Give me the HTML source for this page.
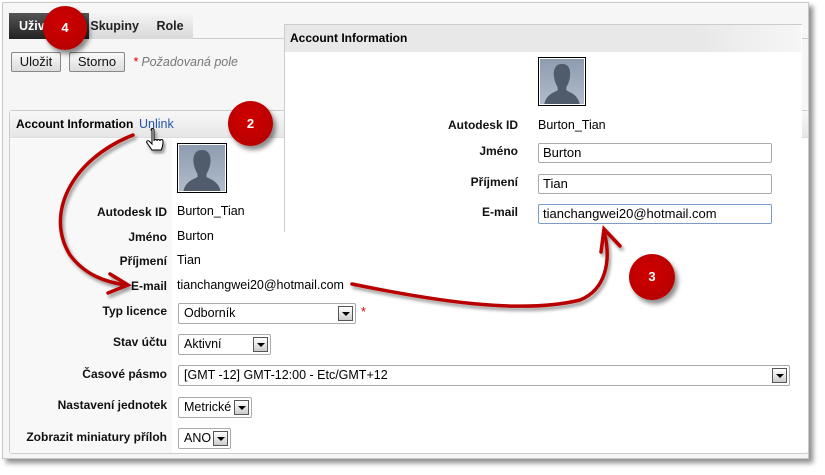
<!DOCTYPE html>
<html><head><meta charset="utf-8"><style>
*{box-sizing:border-box}
body{margin:0;width:825px;height:475px;background:#fff;font-family:"Liberation Sans",Arial,sans-serif;font-size:12.5px;color:#000;position:relative;overflow:hidden}
.a{position:absolute}
.frame{left:2px;top:2px;width:807px;height:457px;background:#f6f6f6;border:1px solid #c8c8c8;box-shadow:4px 4px 5px rgba(0,0,0,.45)}
.tab{top:13px;height:26px;font-weight:bold;line-height:26px;color:#222;background:linear-gradient(#f4f4f4,#d8d8d8);font-size:12.5px;text-align:center}
.btn{top:52px;height:20px;border:1px solid #888;border-radius:2px;background:linear-gradient(#fafafa,#dcdcdc);line-height:18px;text-align:center;color:#111;font-size:13px}
.panel{left:9px;top:110px;width:800px;height:344px;border:1px solid #ccc;border-radius:3px;background:#fff}
.lab{width:160px;text-align:right;font-weight:bold;left:7px;color:#111;font-size:12px}
.val{left:177px}
.sel{height:21px;border:1px solid #aaa;border-radius:2px;background:#fff;padding-left:5px;line-height:19px}
.sel i{position:absolute;right:2px;top:2px;width:15px;height:15px;border:1px solid #555;background:linear-gradient(#fff,#ccc)}
.sel i:after{content:"";position:absolute;left:3px;top:5px;border:4px solid transparent;border-top:4px solid #000;border-bottom:0}
.inp{left:538px;width:234px;height:20px;border:1px solid #aaa;border-radius:2px;background:#fff;padding-left:4px;line-height:18px;font-size:13px}
.av{border:1px solid #000;background:#fff;padding:1px}
.c{border-radius:50%;background:radial-gradient(circle at 45% 40%,#d00000,#b00000);color:#fff;font-weight:bold;text-align:center;font-size:13px;box-shadow:3px 4px 5px rgba(0,0,0,.45)}
</style></head><body>
<div class="a frame"></div>
<div class="a" style="left:9px;top:38px;width:800px;height:1px;background:#ccc"></div>
<div class="a tab" style="left:9px;width:80px;background:linear-gradient(#555,#222);color:#fff;text-align:left;padding-left:10px">Uživatelé</div>
<div class="a tab" style="left:89px;width:58px;text-align:right;padding-right:8px">Skupiny</div>
<div class="a tab" style="left:147px;width:46px">Role</div>
<div class="a btn" style="left:11px;width:50px">Uložit</div>
<div class="a btn" style="left:69px;width:56px">Storno</div>
<div class="a" style="left:133px;top:55px;color:#777;font-style:italic;font-size:12.5px"><span style="color:#d00">*</span> Požadovaná pole</div>

<div class="a panel"></div>
<div class="a" style="left:10px;top:111px;width:798px;height:27px;background:linear-gradient(#f8f8f8,#e6e6e6);border-bottom:1px solid #ddd"></div>
<div class="a" style="left:10px;top:139px;width:162px;height:314px;background:#f8f8f8"></div>
<div class="a" style="left:16px;top:117px;font-weight:bold;font-size:12px">Account Information</div>
<div class="a" style="left:139px;top:117px;color:#2255aa;font-size:12.5px">Unlink</div>
<div class="a av" style="left:177px;top:143px;width:50px;height:50px"><svg width="46" height="46" viewBox="0 0 46 46"><defs><linearGradient id="g" x1="0" y1="0" x2="0" y2="1"><stop offset="0" stop-color="#8e9cb0"/><stop offset="1" stop-color="#b0bccb"/></linearGradient></defs><rect width="46" height="46" fill="url(#g)"/><path d="M23 5c-7 0-9 6-8.5 12 .5 6 3 10 4 12v3c-3 2-12 4-14 14h37c-2-10-11-12-14-14v-3c1-2 3.5-6 4-12C32 11 30 5 23 5z" fill="#505c6c"/></svg></div>
<div class="a lab" style="top:205px">Autodesk ID</div><div class="a val" style="top:204px">Burton_Tian</div>
<div class="a lab" style="top:230px">Jméno</div><div class="a val" style="top:229px">Burton</div>
<div class="a lab" style="top:254px">Příjmení</div><div class="a val" style="top:253px">Tian</div>
<div class="a lab" style="top:279px">E-mail</div><div class="a val" style="top:278px">tianchangwei20@hotmail.com</div>
<div class="a lab" style="top:304px">Typ licence</div><div class="a sel" style="left:178px;top:303px;width:178px">Odborník<i></i></div><div class="a" style="left:361px;top:305px;color:#d00">*</div>
<div class="a lab" style="top:335px">Stav účtu</div><div class="a sel" style="left:178px;top:334px;width:93px">Aktivní<i></i></div>
<div class="a lab" style="top:367px">Časové pásmo</div><div class="a sel" style="left:178px;top:365px;width:612px">[GMT -12] GMT-12:00 - Etc/GMT+12<i></i></div>
<div class="a lab" style="top:398px">Nastavení jednotek</div><div class="a sel" style="left:178px;top:397px;width:74px">Metrické<i></i></div>
<div class="a lab" style="top:430px">Zobrazit miniatury příloh</div><div class="a sel" style="left:178px;top:428px;width:53px">ANO<i></i></div>

<div class="a" style="left:284px;top:24px;width:518px;height:208px;background:#fff;border:1px solid #ccc;border-right:none;border-bottom:none"></div>
<div class="a" style="left:285px;top:25px;width:516px;height:27px;background:linear-gradient(90deg,#e8e8e8 80%,#f6f6f6)"></div>
<div class="a" style="left:290px;top:31px;font-weight:bold;font-size:12px">Account Information</div>
<div class="a av" style="left:538px;top:57px;width:48px;height:49px"><svg width="44" height="45" viewBox="0 0 46 46" preserveAspectRatio="none"><rect width="46" height="46" fill="url(#g)"/><path d="M23 5c-7 0-9 6-8.5 12 .5 6 3 10 4 12v3c-3 2-12 4-14 14h37c-2-10-11-12-14-14v-3c1-2 3.5-6 4-12C32 11 30 5 23 5z" fill="#505c6c"/></svg></div>
<div class="a lab" style="left:358px;top:118px">Autodesk ID</div><div class="a" style="left:538px;top:118px">Burton_Tian</div>
<div class="a lab" style="left:358px;top:144px">Jméno</div><div class="a inp" style="top:143px">Burton</div>
<div class="a lab" style="left:358px;top:175px">Příjmení</div><div class="a inp" style="top:174px">Tian</div>
<div class="a lab" style="left:358px;top:205px">E-mail</div><div class="a inp" style="top:204px;border-color:#7a9cc8">tianchangwei20@hotmail.com</div>

<svg class="a" style="left:0;top:0" width="825" height="475" viewBox="0 0 825 475">
<defs><filter id="s" x="-20%" y="-20%" width="140%" height="140%"><feDropShadow dx="2" dy="3" stdDeviation="1.5" flood-opacity=".4"/></filter></defs>
<g fill="none" stroke="#b80000" stroke-width="3.5" stroke-linecap="round" filter="url(#s)">
<path d="M133 135 C70 160 45 215 70 255 C85 275 105 282 126 285"/>
<path d="M110 274 L128 285 L108 293"/>
<path d="M352 284 C430 300 520 315 580 300 C605 290 612 262 604 231"/>
<path d="M601 252 L604 229 L620 246"/>
</g>
<path d="M152 130 v14 l-3 -3 c-2 -1 -3 1 -2 2 l5 7 h9 c2 -3 2 -6 2 -9 c0 -2 -3 -2 -3 0 c0 -2 -3 -2 -3 0 c0 -2 -3 -2 -3 0 v-11 c0 -2 -3 -2 -3 0z" fill="#fff" stroke="#000" stroke-width="1" filter="url(#s)"/>
</svg>
<div class="a c" style="left:43px;top:6px;width:44px;height:44px;line-height:44px">4</div>
<div class="a c" style="left:228px;top:101px;width:45px;height:45px;line-height:45px">2</div>
<div class="a c" style="left:629px;top:254px;width:46px;height:46px;line-height:46px">3</div>
</body></html>
